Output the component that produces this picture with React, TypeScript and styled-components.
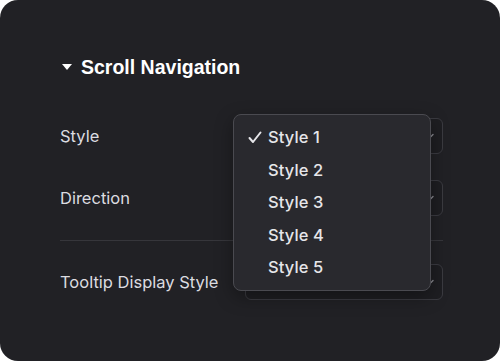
import React from "react";
import styled, { createGlobalStyle } from "styled-components";

const GlobalStyle = createGlobalStyle`
  html, body {
    margin: 0;
    padding: 0;
    background: #ffffff;
  }
  body {
    font-family: Inter, "Noto Sans", "Liberation Sans", sans-serif;
    -webkit-font-smoothing: antialiased;
  }
`;

const Card = styled.div`
  width: 500px;
  height: 361px;
  box-sizing: border-box;
  background: #212125;
  border-radius: 18px;
  padding: 56px 57px 0 60px;
  display: flex;
  flex-direction: column;
`;

const Header = styled.div`
  display: flex;
  align-items: center;
  gap: 9px;
  height: 22px;
  color: #ffffff;
  font-family: "Liberation Sans", Arial, sans-serif;
  font-size: 19.5px;
  font-weight: 700;
`;

const Caret = styled.span`
  width: 0;
  height: 0;
  margin-left: 2px;
  border-left: 5.5px solid transparent;
  border-right: 5.5px solid transparent;
  border-top: 6px solid #ffffff;
`;

const Rows = styled.div`
  margin-top: 40px;
  display: flex;
  flex-direction: column;
`;

const Row = styled.div<{ $gap?: number }>`
  display: flex;
  align-items: center;
  justify-content: space-between;
  height: 36px;
  margin-top: ${(p) => p.$gap ?? 0}px;
`;

const Label = styled.span`
  color: #dcdce0;
  font-size: 16.5px;
  font-weight: 400;
`;

const SelectWrap = styled.div`
  position: relative;
  width: 198px;
  height: 36px;
`;

const SelectBox = styled.div`
  width: 100%;
  height: 100%;
  box-sizing: border-box;
  border: 1px solid #3b3b41;
  border-radius: 6px;
  background: #1e1e22;
  display: flex;
  align-items: center;
  justify-content: flex-end;
  padding-right: 8px;
  color: #8a8a90;
`;

const Divider = styled.div`
  height: 1px;
  background: #36363b;
  margin-top: 24px;
`;

const Menu = styled.ul`
  position: absolute;
  left: -12px;
  top: -4px;
  width: 198px;
  margin: 0;
  padding: 6px 0 6px;
  list-style: none;
  box-sizing: border-box;
  background: #29292e;
  border: 1px solid #4a4a50;
  border-radius: 8px;
  box-shadow: 0 6px 18px rgba(0, 0, 0, 0.35);
  z-index: 2;
`;

const Item = styled.li`
  display: flex;
  align-items: center;
  height: 32.5px;
  padding-left: 14px;
  color: #e6e6ea;
  font-size: 16.5px;
  font-weight: 500;
  letter-spacing: 0.1px;
`;

const CheckSlot = styled.span`
  width: 20px;
  display: flex;
  align-items: center;
`;

const Check = () => (
  <svg width="14" height="13" viewBox="0 0 14 13" fill="none">
    <path d="M1.5 7 L5 11 L12.5 1.5" stroke="#e6e6ea" strokeWidth="2" strokeLinecap="round" strokeLinejoin="round" />
  </svg>
);

const Chevron = () => (
  <svg width="8" height="6" viewBox="0 0 8 6" fill="none">
    <path d="M1 1.5 L4 4.5 L7 1.5" stroke="#8a8a90" strokeWidth="1.4" strokeLinecap="round" strokeLinejoin="round" />
  </svg>
);

const options = ["Style 1", "Style 2", "Style 3", "Style 4", "Style 5"];

export default function App() {
  return (
    <>
      <GlobalStyle />
      <Card>
        <Header>
          <Caret />
          Scroll Navigation
        </Header>
        <Rows>
          <Row>
            <Label>Style</Label>
            <SelectWrap>
              <SelectBox>
                <Chevron />
              </SelectBox>
              <Menu>
                {options.map((o, i) => (
                  <Item key={o}>
                    <CheckSlot>{i === 0 && <Check />}</CheckSlot>
                    {o}
                  </Item>
                ))}
              </Menu>
            </SelectWrap>
          </Row>
          <Row $gap={26}>
            <Label>Direction</Label>
            <SelectWrap>
              <SelectBox>
                <Chevron />
              </SelectBox>
            </SelectWrap>
          </Row>
          <Divider />
          <Row $gap={23}>
            <Label>Tooltip Display Style</Label>
            <SelectWrap>
              <SelectBox>
                <Chevron />
              </SelectBox>
            </SelectWrap>
          </Row>
        </Rows>
      </Card>
    </>
  );
}
